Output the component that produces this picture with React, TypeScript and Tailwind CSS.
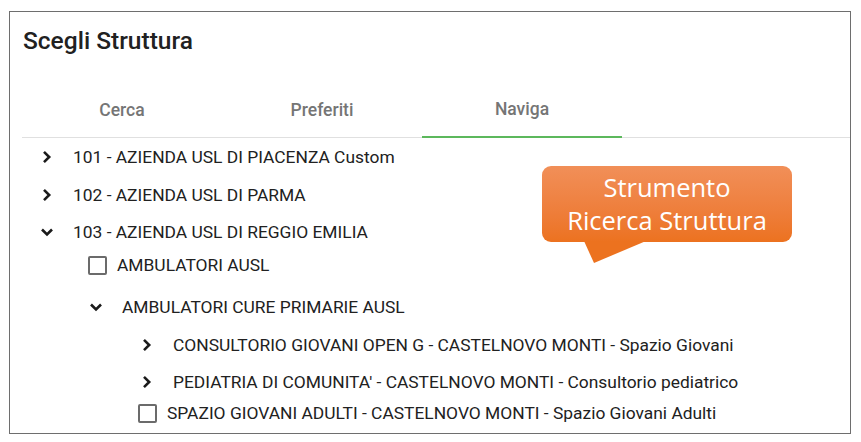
import React from 'react';

type Node = {
  label: string;
  kind: 'closed' | 'open' | 'check';
  pad: string;
  h: string;
};

const rows: Node[] = [
  { label: '101 - AZIENDA USL DI PIACENZA Custom', kind: 'closed', pad: 'pl-[30px]', h: 'h-[38px]' },
  { label: '102 - AZIENDA USL DI PARMA', kind: 'closed', pad: 'pl-[30px]', h: 'h-[38px]' },
  { label: '103 - AZIENDA USL DI REGGIO EMILIA', kind: 'open', pad: 'pl-[30px]', h: 'h-[36px]' },
  { label: 'AMBULATORI AUSL', kind: 'check', pad: 'pl-[78px]', h: 'h-[30px]' },
  { label: 'AMBULATORI CURE PRIMARIE AUSL', kind: 'open', pad: 'pl-[79px]', h: 'h-[38px] mt-[8px]' },
  { label: 'CONSULTORIO GIOVANI OPEN G - CASTELNOVO MONTI - Spazio Giovani', kind: 'closed', pad: 'pl-[130px]', h: 'h-[38px]' },
  { label: "PEDIATRIA DI COMUNITA' - CASTELNOVO MONTI - Consultorio pediatrico", kind: 'closed', pad: 'pl-[130px]', h: 'h-[36px]' },
  { label: 'SPAZIO GIOVANI ADULTI - CASTELNOVO MONTI - Spazio Giovani Adulti', kind: 'check', pad: 'pl-[128px]', h: 'h-[26px]' },
];

function Chevron({ open }: { open: boolean }) {
  return (
    <svg width="14" height="14" viewBox="0 0 14 14" className="shrink-0">
      {open ? (
        <polyline points="2,4.5 7,9.5 12,4.5" fill="none" stroke="#1a1a1a" strokeWidth="2.6" />
      ) : (
        <polyline points="4,1.8 9.2,7 4,12.2" fill="none" stroke="#1a1a1a" strokeWidth="2.6" />
      )}
    </svg>
  );
}

function TreeRow({ node }: { node: Node }) {
  return (
    <div className={`flex items-center ${node.h} ${node.pad}`}>
      {node.kind === 'check' ? (
        <span className="w-[19px] h-[19px] border-2 border-[#6b6b6b] rounded-[2px] shrink-0 mr-[10px]" />
      ) : (
        <span className="w-[14px] flex justify-center mr-[19px]">
          <Chevron open={node.kind === 'open'} />
        </span>
      )}
      <span className="text-[17.4px] text-[#212121] whitespace-nowrap">{node.label}</span>
    </div>
  );
}

export default function App() {
  const tabs = ['Cerca', 'Preferiti', 'Naviga'];
  return (
    <div className="w-[861px] h-[442px] bg-white pt-[11px] pl-[9px] font-['Roboto',sans-serif]">
      <div className="relative w-[842px] h-[423px] border border-[#6e6e6e] overflow-hidden">
        <h1 className="h-[58px] flex items-center pl-[13px] text-[24.5px] font-medium text-[#212121]">
          Scegli Struttura
        </h1>

        <div className="ml-[12px] h-[68px] flex border-b border-[#e0e0e0]">
          {tabs.map((t, i) => (
            <div
              key={t}
              className={`w-[200px] flex items-end justify-center pb-[17px] text-[17.5px] font-medium text-[#757575] ${
                i === 2 ? 'border-b-2 border-[#5cb85c] -mb-px' : ''
              }`}
            >
              <span className="leading-[20px]">{t}</span>
            </div>
          ))}
        </div>

        <div className="flex flex-col">
          {rows.map((r) => (
            <TreeRow key={r.label} node={r} />
          ))}
        </div>

        <div className="absolute left-[532px] top-[154px] w-[250px] h-[76px]">
          <div className="w-full h-full rounded-[9px] bg-gradient-to-b from-[#f18f58] to-[#ec721f] flex flex-col items-center justify-center text-white text-[25.5px] leading-[33px] font-['Open_Sans','Noto_Sans',sans-serif]">
            <span>Strumento</span>
            <span>Ricerca Struttura</span>
          </div>
          <svg className="absolute left-[42px] top-[75px]" width="64" height="23" viewBox="0 0 64 23">
            <polygon points="0,0 62,0 10,22" fill="#ec721f" />
          </svg>
        </div>
      </div>
    </div>
  );
}
